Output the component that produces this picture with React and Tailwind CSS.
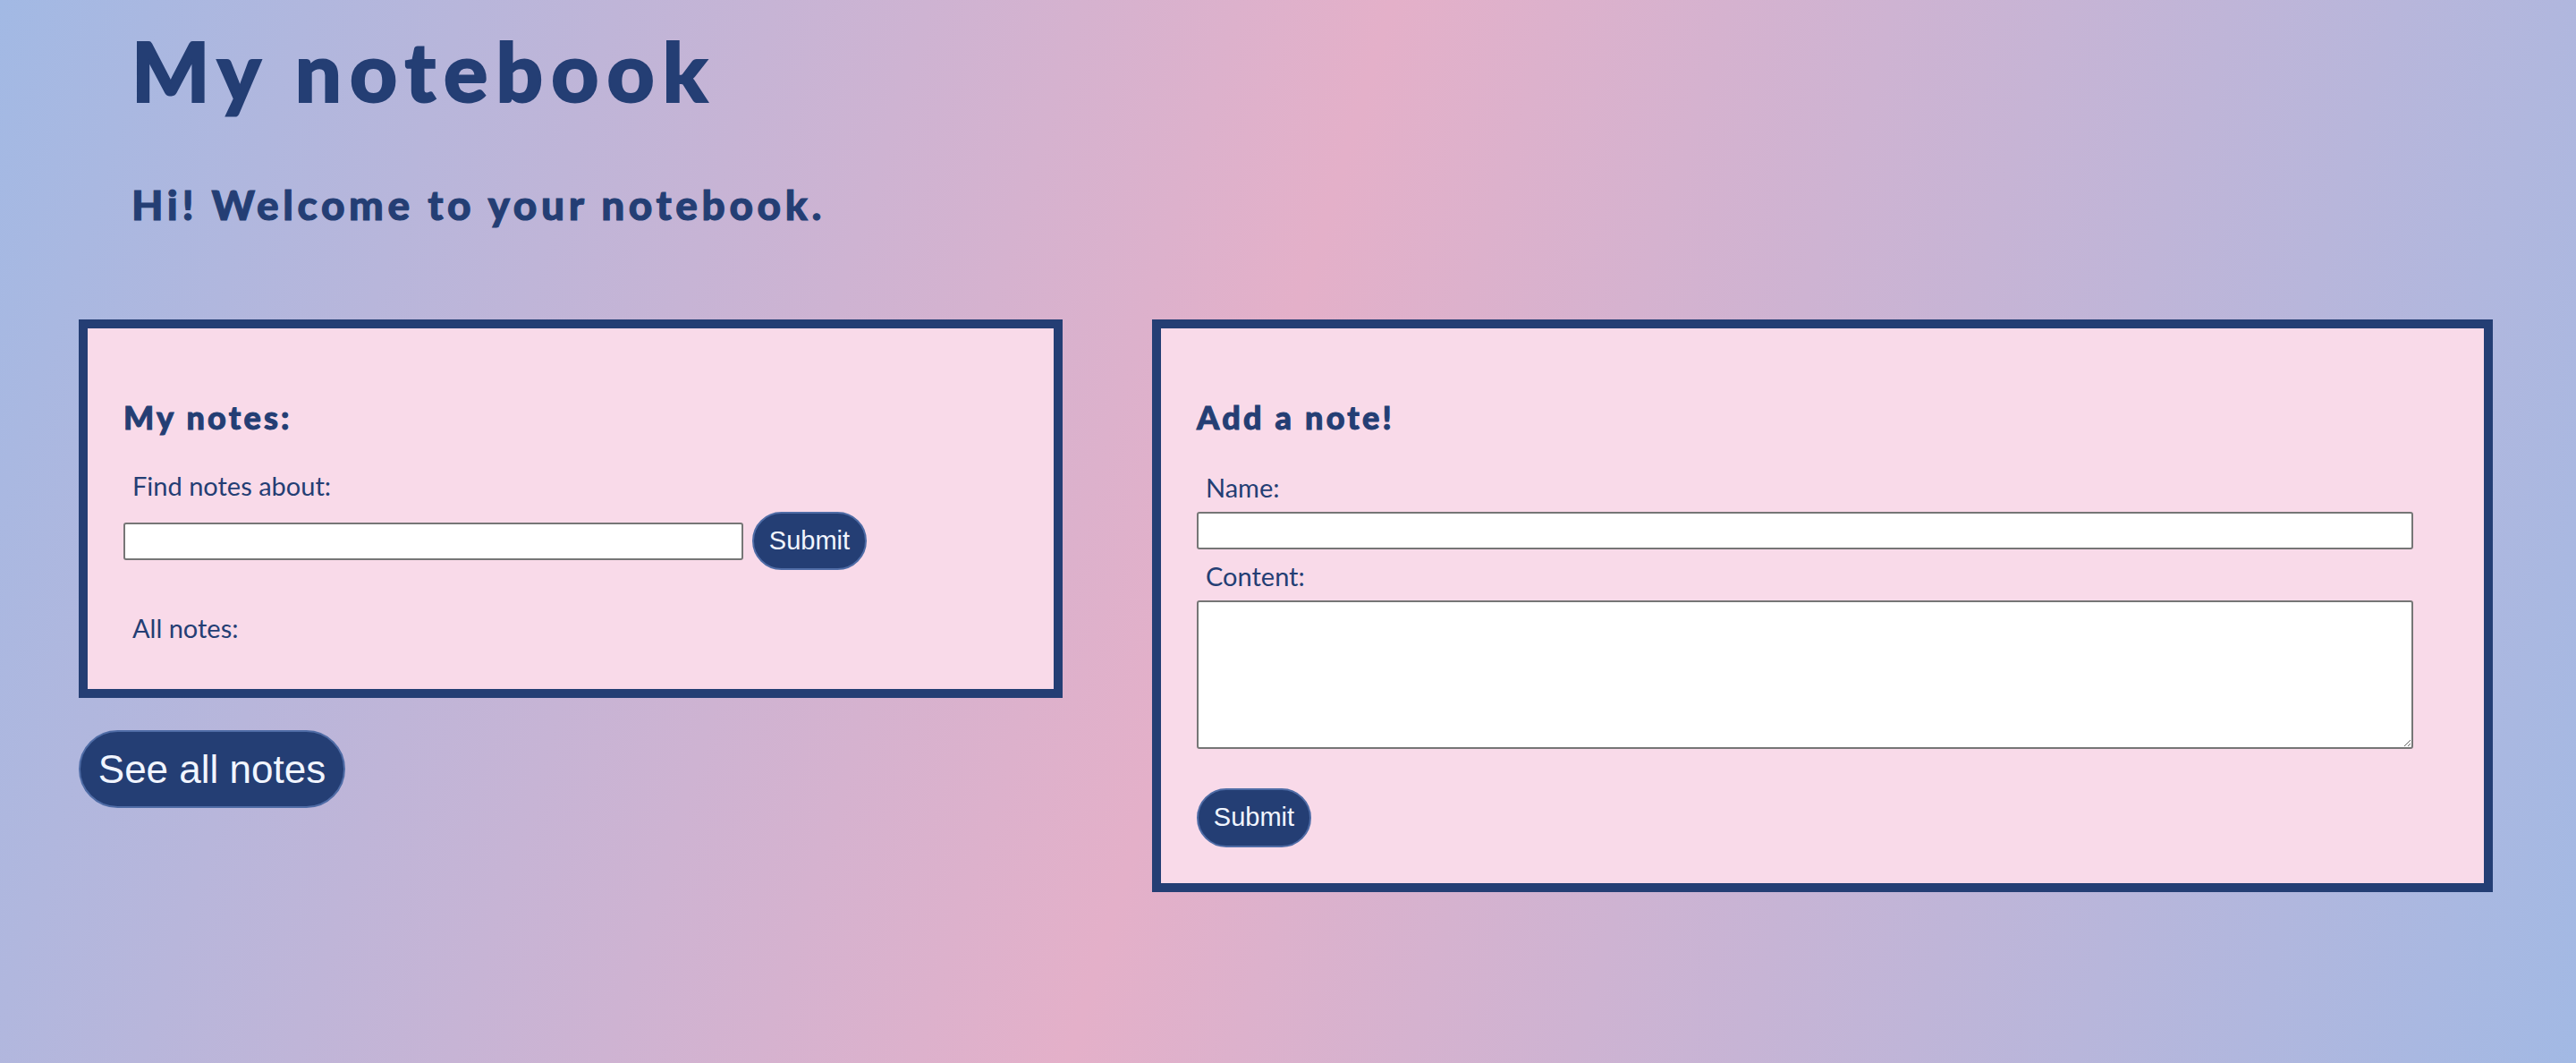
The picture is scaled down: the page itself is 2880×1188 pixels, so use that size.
import React from 'react';

const ink = 'text-[#243e74]';

function Label({ children }) {
  return (
    <div className={`ml-[10px] font-['Lato',sans-serif] text-[29px] leading-[30px] ${ink}`}>
      {children}
    </div>
  );
}

function PillButton({ children, className = '' }) {
  return (
    <button
      className={`flex items-center justify-center rounded-full border-2 border-[#4f6ca6] bg-[#243e74] font-['Liberation_Sans',Arial,sans-serif] text-[#f1f5ff] ${className}`}
    >
      {children}
    </button>
  );
}

export default function App() {
  return (
    <div className="min-h-screen w-full bg-[linear-gradient(107deg,#a2b9e4_0%,#e4b0c9_48%,#a2b9e4_100%)]">
      {/* Header */}
      <header className="pl-[147px] pt-[33px]">
        <h1 className={`font-['Lato',sans-serif] text-[92px] leading-[92px] font-black tracking-[0.1em] [-webkit-text-stroke:2px_#243e74] ${ink}`}>
          My notebook
        </h1>
        <h2 className={`mt-[81px] font-['Lato',sans-serif] text-[46px] leading-[46px] font-black tracking-[0.1em] [-webkit-text-stroke:1px_#243e74] ${ink}`}>
          Hi! Welcome to your notebook.
        </h2>
      </header>

      {/* Main */}
      <main className="mt-[105px] flex items-start gap-[100px] px-[88px]">
        {/* Left column */}
        <div className="flex w-[1100px] flex-col items-start">
          <section className="w-full border-[10px] border-[#243e74] bg-[#f9dae9] px-[40px] pt-[81px] pb-[53px]">
            <h3 className={`font-['Lato',sans-serif] text-[36px] leading-[36px] font-black tracking-[0.09em] [-webkit-text-stroke:1px_#243e74] ${ink}`}>
              My notes:
            </h3>
            <div className="mt-[44px]">
              <Label>Find notes about:</Label>
            </div>
            <div className="mt-[14px] flex items-center gap-[10px]">
              <input
                type="text"
                className="h-[42px] w-[693px] rounded-[3px] border-2 border-[#767676] bg-white px-2"
              />
              <PillButton className="h-[65px] w-[128px] text-[29px]">Submit</PillButton>
            </div>
            <div className="mt-[50px]">
              <Label>All notes:</Label>
            </div>
          </section>

          <PillButton className="mt-[36px] h-[87px] w-[298px] text-[44px]">See all notes</PillButton>
        </div>

        {/* Right card */}
        <section className="w-[1499px] border-[10px] border-[#243e74] bg-[#f9dae9] px-[40px] pt-[81px] pb-[40px]">
          <h3 className={`font-['Lato',sans-serif] text-[36px] leading-[36px] font-black tracking-[0.09em] [-webkit-text-stroke:1px_#243e74] ${ink}`}>
            Add a note!
          </h3>
          <div className="mt-[46px]">
            <Label>Name:</Label>
          </div>
          <input
            type="text"
            className="mt-[12px] block h-[42px] w-[1360px] rounded-[3px] border-2 border-[#767676] bg-white px-2"
          />
          <div className="mt-[15px]">
            <Label>Content:</Label>
          </div>
          <textarea className="mt-[12px] block h-[166px] w-[1360px] rounded-[3px] border-2 border-[#767676] bg-white p-2" />
          <PillButton className="mt-[44px] h-[66px] w-[128px] text-[29px]">Submit</PillButton>
        </section>
      </main>
    </div>
  );
}
